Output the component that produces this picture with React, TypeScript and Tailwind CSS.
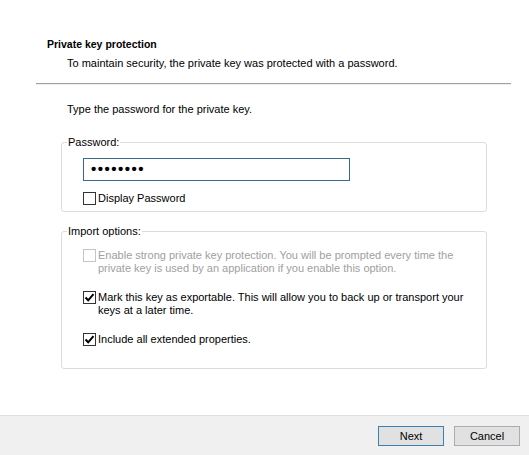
import React from 'react';

const font = { fontFamily: '"Liberation Sans", Arial, sans-serif' };

const Check = ({ checked, disabled }: { checked?: boolean; disabled?: boolean }) => (
    <span
        className={`flex h-[13px] w-[13px] shrink-0 items-center justify-center border bg-white ${disabled ? 'border-[#c4c4c4]' : 'border-[#333333]'}`}
    >
        {checked && (
            <svg width="11" height="11" viewBox="0 0 11 11">
                <path d="M1.5 5.5 L4.2 8.3 L9.5 2.2" fill="none" stroke="#000" strokeWidth="2" />
            </svg>
        )}
    </span>
);

const Option = ({ checked, disabled, children }: { checked?: boolean; disabled?: boolean; children: React.ReactNode }) => (
    <div className="flex items-start gap-[2px]">
        <Check checked={checked} disabled={disabled} />
        <span className={`whitespace-nowrap leading-[13px] ${disabled ? 'text-[#a0a0a0]' : 'text-black'}`}>{children}</span>
    </div>
);

export default function App() {
    return (
        <div className="flex h-[455px] w-[529px] flex-col bg-white text-[11px] text-black" style={font}>
            <div className="pl-[47px] pt-[37px]">
                <div className="text-[10.5px] font-bold leading-[14px]">Private key protection</div>
                <div className="mt-[5px] whitespace-nowrap pl-[20px] leading-[14px]">To maintain security, the private key was protected with a password.</div>
            </div>
            <div className="ml-[36px] mr-[18px] mt-[13px] h-[2px] border-t border-[#a0a0a0] bg-[#eeeeee]" />
            <div className="pl-[67px] pt-[17px] leading-[14px]">Type the password for the private key.</div>

            <fieldset className="ml-[61px] mt-[19px] w-[426px] rounded-[3px] border border-[#dcdcdc] pb-[6px] pl-[21px]">
                <legend className="-ml-[16px] px-[1px] leading-[14px]">Password:</legend>
                <div className="mt-[9px] flex h-[23px] w-[267px] items-center border border-[#3a6a88] pl-[7px] text-[15px] font-bold tracking-[1.5px]">
                    ••••••••
                </div>
                <div className="mt-[11px]">
                    <Option>Display Password</Option>
                </div>
            </fieldset>

            <fieldset className="ml-[61px] mt-[12px] w-[426px] rounded-[3px] border border-[#dcdcdc] pb-[22px] pl-[21px]">
                <legend className="-ml-[16px] px-[1px] leading-[14px]">Import options:</legend>
                <div className="mt-[11px] flex flex-col gap-[16px]">
                    <Option disabled>
                        Enable strong private key protection. You will be prompted every time the
                        <br />
                        private key is used by an application if you enable this option.
                    </Option>
                    <Option checked>
                        Mark this key as exportable. This will allow you to back up or transport your
                        <br />
                        keys at a later time.
                    </Option>
                    <Option checked>Include all extended properties.</Option>
                </div>
            </fieldset>

            <div className="mt-auto flex h-[40px] items-start justify-end gap-[10px] border-t border-[#dfdfdf] bg-[#f0f0f0] pr-[9px] pt-[10px]">
                <button className="h-[20px] w-[66px] border border-[#3c7fb1] bg-[#e1e1e1] leading-[18px]">Next</button>
                <button className="h-[20px] w-[66px] border border-[#adadad] bg-[#e1e1e1] leading-[18px]">Cancel</button>
            </div>
        </div>
    );
}
